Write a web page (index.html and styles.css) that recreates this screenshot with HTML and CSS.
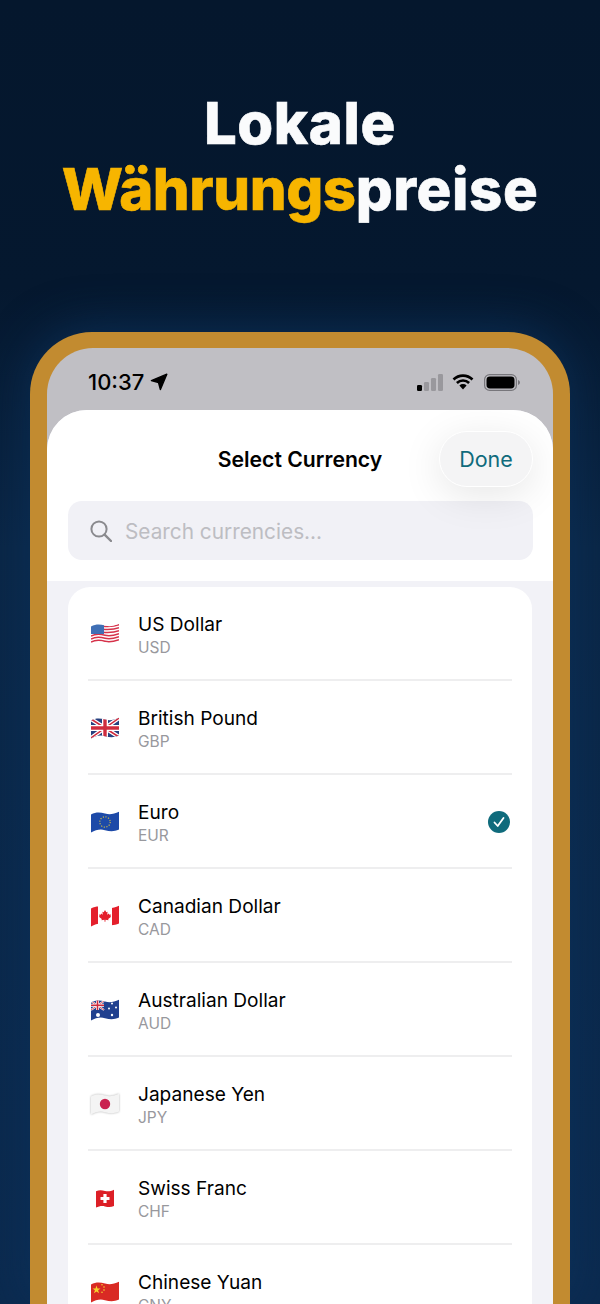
FILE: index.html
```html
<!doctype html>
<html>
  <head>
    <meta charset="utf-8">
    <title>Lokale Währungspreise</title>
    <link rel="stylesheet" href="styles.css">
  </head>
  <body>
    <svg class="defs" width="0" height="0">
      <defs>
        <clipPath id="wave"><path d="M0 3.5C5 1 9 1.2 14 2.6S23 3 28 .8V18.6C23 20.8 19 20.6 14 19.2S5 19 0 21.400Z"/></clipPath>
        <clipPath id="wave-sq"><path d="M0 2.200C3 1 6 1.200 9 2S15 2.200 18 .8V17C15 18.400 12 18.200 9 17.400S3 17.200 0 18.600Z"/></clipPath>
      </defs>
    </svg>

    <h1 class="title">Lokale<br><span class="accent">Währungs</span>preise</h1>

    <div class="phone">
      <div class="screen">
        <div class="status">
          <div class="time">10:37
            <svg class="arrow" viewBox="0 0 18 18"><path d="M16.800 1.200 10.400 16.600 8.500 9.500 1.400 7.600Z" fill="#000" stroke="#000" stroke-width="1.400" stroke-linejoin="round"/></svg>
          </div>
          <div class="status-icons">
            <svg class="bars" viewBox="0 0 26 17">
              <rect x="0" y="11" width="5" height="6" rx="1.200" fill="#000"/>
              <rect x="7" y="8" width="5" height="9" rx="1.200" fill="#99989d"/>
              <rect x="14" y="4" width="5" height="13" rx="1.200" fill="#99989d"/>
              <rect x="21" y="0" width="5" height="17" rx="1.200" fill="#99989d"/>
            </svg>
            <svg class="wifi" viewBox="0 0 22 16">
              <path d="M1.500 5.500a13.500 13.500 0 0 1 19 0M4.900 9a8.800 8.800 0 0 1 12.200 0" fill="none" stroke="#000" stroke-width="2.600"/>
              <path d="M7.400 11.400a5.100 5.100 0 0 1 7.200 0L11 15.400Z" fill="#000"/>
            </svg>
            <svg class="battery" viewBox="0 0 36 17">
              <rect x=".6" y=".6" width="31.800" height="15.800" rx="5" fill="none" stroke="#77767b" stroke-width="1.200"/>
              <rect x="2.500" y="2.500" width="28" height="12" rx="3.400" fill="#000"/>
              <path d="M34 6v5c1.200-.4 2-1.400 2-2.500S35.200 6.400 34 6Z" fill="#77767b"/>
            </svg>
          </div>
        </div>

        <div class="sheet">
          <div class="sheet-head">
            <div class="nav">
              <div class="nav-title">Select Currency</div>
              <button class="done">Done</button>
            </div>
            <div class="search">
              <svg class="search-icon" viewBox="0 0 22 22"><circle cx="9" cy="9" r="7.600" fill="none" stroke="#8a8a8e" stroke-width="2"/><path d="M14.600 14.600 21 21" stroke="#8a8a8e" stroke-width="2.400" stroke-linecap="round"/></svg>
              <span class="placeholder">Search currencies...</span>
            </div>
          </div>

          <div class="list-wrap">
            <div class="card">
              <div class="row">
                <svg class="flag" viewBox="0 0 28 22"><g clip-path="url(#wave)">
                  <rect width="28" height="22" fill="#fff"/>
                  <g fill="none" stroke="#d6324a" stroke-width="1.500"><path d="M12 3.300C18 3.500 22 4 28 1.800"/><path d="M12 6.300C18 6.500 22 7 28 4.800"/><path d="M12 9.300C18 9.500 22 10 28 7.800"/><path d="M0 13C5 10.500 9 11 14 12.300S23 12.500 28 10.800"/><path d="M0 16C5 13.500 9 14 14 15.300S23 15.500 28 13.800"/><path d="M0 19C5 16.500 9 17 14 18.300S23 18.500 28 16.800"/></g>
                  <rect width="13" height="11" fill="#3f6fb5"/>
                </g></svg>
                <div class="names"><div class="name">US Dollar</div><div class="code">USD</div></div>
              </div>
              <div class="row">
                <svg class="flag" viewBox="0 0 28 22"><g clip-path="url(#wave)">
                  <rect width="28" height="22" fill="#27407f"/>
                  <path d="M0 2 28 20M28 1 0 21" stroke="#fff" stroke-width="4"/>
                  <path d="M0 2 28 20M28 1 0 21" stroke="#cf2b3e" stroke-width="1.500"/>
                  <path d="M14 0V22M0 11H28" stroke="#fff" stroke-width="6"/>
                  <path d="M14 0V22M0 11H28" stroke="#cf2b3e" stroke-width="3.400"/>
                </g></svg>
                <div class="names"><div class="name">British Pound</div><div class="code">GBP</div></div>
              </div>
              <div class="row">
                <svg class="flag" viewBox="0 0 28 22"><g clip-path="url(#wave)">
                  <rect width="28" height="22" fill="#1d4aa8"/>
                  <circle cx="14" cy="11" r="5.200" fill="none" stroke="#c9b84a" stroke-width="1.200" stroke-dasharray="1.200 1.500"/>
                </g></svg>
                <div class="names"><div class="name">Euro</div><div class="code">EUR</div></div>
                <svg class="check" viewBox="0 0 22 22"><circle cx="11" cy="11" r="11" fill="#0f6b7c"/><path d="M6.500 11.500 9.700 15 15.500 7" fill="none" stroke="#fff" stroke-width="1.800" stroke-linecap="round" stroke-linejoin="round"/></svg>
              </div>
              <div class="row">
                <svg class="flag" viewBox="0 0 28 22"><g clip-path="url(#wave)">
                  <rect width="28" height="22" fill="#fff"/>
                  <rect width="7" height="22" fill="#e4202c"/>
                  <rect x="21" width="7" height="22" fill="#e4202c"/>
                  <path d="M14 5l1.300 2.300 1.300-.6-.4 3 1.600-1.200.6 1.200 1.600-.2-.6 1.800.8.500-3 2.200.3 1.200-3-.4-.1 2h-.8l-.1-2-3 .4.300-1.200-3-2.200.8-.5-.6-1.800 1.600.2.600-1.200 1.600 1.200-.4-3 1.300.6Z" fill="#e4202c"/>
                </g></svg>
                <div class="names"><div class="name">Canadian Dollar</div><div class="code">CAD</div></div>
              </div>
              <div class="row">
                <svg class="flag" viewBox="0 0 28 22"><g clip-path="url(#wave)">
                  <rect width="28" height="22" fill="#20408f"/>
                  <path d="M0 2 13 11M13 2 0 11" stroke="#fff" stroke-width="2"/>
                  <path d="M0 2 13 11M13 2 0 11" stroke="#cf2b3e" stroke-width=".8"/>
                  <path d="M6.500 1V11M0 6.200H13" stroke="#fff" stroke-width="3"/>
                  <path d="M6.500 1V11M0 6.200H13" stroke="#cf2b3e" stroke-width="1.600"/>
                  <g fill="#fff"><circle cx="7" cy="16" r="2"/><circle cx="21" cy="4.500" r="1"/><circle cx="25" cy="8.500" r="1"/><circle cx="18" cy="9.500" r="1"/><circle cx="21" cy="16" r="1.200"/></g>
                </g></svg>
                <div class="names"><div class="name">Australian Dollar</div><div class="code">AUD</div></div>
              </div>
              <div class="row">
                <svg class="flag flag-edge" viewBox="0 0 28 22"><g clip-path="url(#wave)">
                  <rect width="28" height="22" fill="#f4f4f4"/>
                  <circle cx="14" cy="11" r="5.200" fill="#c9224f"/>
                </g></svg>
                <div class="names"><div class="name">Japanese Yen</div><div class="code">JPY</div></div>
              </div>
              <div class="row">
                <div class="flag-slot">
                  <svg class="flag-sq" viewBox="0 0 18 19"><g clip-path="url(#wave-sq)">
                    <rect width="18" height="19" fill="#dc1f26"/>
                    <path d="M9 5v9M4.500 9.500h9" stroke="#fff" stroke-width="3.200"/>
                  </g></svg>
                </div>
                <div class="names"><div class="name">Swiss Franc</div><div class="code">CHF</div></div>
              </div>
              <div class="row">
                <svg class="flag" viewBox="0 0 28 22"><g clip-path="url(#wave)">
                  <rect width="28" height="22" fill="#d92a24"/>
                  <path d="M5.500 4.500l1 3 3 0-2.400 1.800.9 3-2.500-1.800-2.500 1.800.9-3L1.500 7.500l3 0Z" fill="#f6d32d"/>
                  <g fill="#f6d32d"><circle cx="11" cy="3.800" r=".8"/><circle cx="13" cy="6" r=".8"/><circle cx="13" cy="9" r=".8"/><circle cx="11" cy="11.200" r=".8"/></g>
                </g></svg>
                <div class="names"><div class="name">Chinese Yuan</div><div class="code">CNY</div></div>
              </div>
            </div>
          </div>
        </div>
      </div>
    </div>
  </body>
</html>
```

FILE: styles.css
```css
html, body {
  margin: 0;
  height: 1304px;
  overflow: hidden;
}

body {
  width: 600px;
  background: linear-gradient(#05172d 0%, #05182f 22%, #0a2646 42%, #0b2a4f 100%);
  font-family: "Inter", "Liberation Sans", sans-serif;
  color: #000;
}

.defs {
  display: block;
}

.title {
  margin: 0;
  height: 332px;
  box-sizing: border-box;
  padding-top: 90px;
  font-size: 58px;
  line-height: 66px;
  font-weight: 800;
  letter-spacing: 0.6px;
  text-align: center;
  color: #fafbfc;
  -webkit-text-stroke: 0.6px currentColor;
}

.accent {
  color: #f7b500;
  letter-spacing: -0.4px;
}

.phone {
  margin: 0 30px;
  height: 972px;
  box-sizing: border-box;
  padding: 16px 17px 0 17px;
  background: #c28b30;
  border-radius: 62px 62px 0 0;
  box-shadow: 0 -4px 46px rgba(13, 52, 96, 0.7);
}

.screen {
  height: 100%;
  background: #c0bfc4;
  border-radius: 46px 46px 0 0;
  overflow: hidden;
  display: flex;
  flex-direction: column;
}

.status {
  height: 62px;
  flex: none;
  display: flex;
  justify-content: space-between;
  align-items: center;
  padding: 6px 33px 0 41px;
  box-sizing: border-box;
}

.time {
  display: flex;
  align-items: center;
  gap: 6px;
  font-size: 22px;
  font-weight: 500;
}

.arrow {
  width: 18px;
  height: 18px;
}

.status-icons {
  display: flex;
  align-items: center;
  gap: 9px;
}

.bars {
  width: 26px;
  height: 17px;
}

.wifi {
  width: 22px;
  height: 16px;
}

.battery {
  width: 36px;
  height: 17px;
  margin-left: 1px;
}

.sheet {
  flex: 1;
  background: #f2f2f7;
  border-radius: 40px 40px 0 0;
  overflow: hidden;
}

.sheet-head {
  background: #fff;
  height: 171px;
  box-sizing: border-box;
  padding: 21px 20px 0 21px;
}

.nav {
  height: 56px;
  display: flex;
  align-items: center;
  justify-content: flex-end;
  position: relative;
}

.nav-title {
  position: absolute;
  left: 0;
  right: 0;
  text-align: center;
  font-size: 21.200px;
  font-weight: 600;
  padding-right: 1px;
}

.done {
  width: 94px;
  height: 56px;
  box-sizing: border-box;
  border: 1.500px solid #fff;
  border-radius: 28px;
  background: #f4f4f5;
  box-shadow: 0 8px 40px rgba(0, 0, 0, 0.1);
  color: #0f6b7c;
  font-family: inherit;
  font-size: 21.500px;
  padding: 0;
  position: relative;
}

.search {
  margin-top: 14px;
  height: 59px;
  background: #f1f1f6;
  border-radius: 14px;
  display: flex;
  align-items: center;
  padding-left: 22px;
  gap: 13px;
}

.search-icon {
  width: 22px;
  height: 22px;
}

.placeholder {
  font-size: 20.800px;
  color: #bdbdc2;
  padding-top: 2px;
}

.list-wrap {
  padding: 6px 21px 0 21px;
}

.card {
  background: #fff;
  border-radius: 22px;
  padding: 0 20px 0 20px;
}

.row {
  height: 94px;
  display: flex;
  align-items: center;
  gap: 19px;
  border-bottom: 2px solid #eeeeef;
  box-sizing: border-box;
  padding-top: 2px;
}

.flag {
  width: 28px;
  height: 22px;
  flex: none;
  margin-left: 3px;
  filter: blur(0.4px);
}

.flag-slot {
  width: 28px;
  margin-left: 3px;
  flex: none;
  display: flex;
  justify-content: center;
}

.flag-sq {
  width: 18px;
  height: 19px;
  filter: blur(0.4px);
}

.flag-edge {
  filter: blur(0.4px) drop-shadow(0 0 1px rgba(0, 0, 0, 0.3));
}

.names {
  flex: 1;
}

.name {
  font-size: 19.100px;
  line-height: 26px;
  font-weight: 420;
}

.code {
  font-size: 15.500px;
  line-height: 20px;
  margin-top: 1px;
  color: #98989d;
}

.check {
  width: 22px;
  height: 22px;
  flex: none;
  margin-right: 2px;
}
```
